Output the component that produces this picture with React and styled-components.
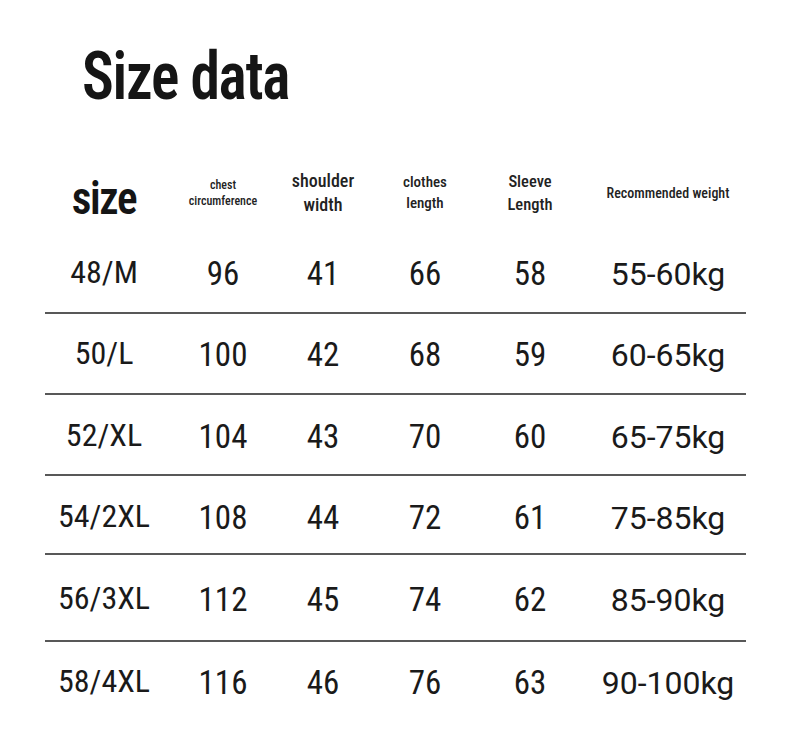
import React from 'react';
import styled, { createGlobalStyle } from 'styled-components';

const GlobalStyle = createGlobalStyle`
  html, body {
    margin: 0;
    padding: 0;
    background: #ffffff;
  }
  body {
    width: 790px;
    height: 738px;
    overflow: hidden;
    color: #1a1a1a;
    font-family: Roboto, "Liberation Sans", sans-serif;
  }
`;

const CONDENSED = `"Roboto Condensed", Roboto, "Liberation Sans", sans-serif`;

const Page = styled.div`
  padding: 43px 44px 0 45px;
`;

const TitleBar = styled.div`
  height: 67px;
  margin: 0 0 50px 37px;
`;

const Title = styled.h1`
  display: inline-block;
  margin: 0;
  font-family: ${CONDENSED};
  font-stretch: condensed;
  font-weight: 600;
  font-size: 67px;
  line-height: 67px;
  letter-spacing: -1.5px;
  transform: scaleX(0.89);
  transform-origin: left center;
  color: #151515;
`;

const Table = styled.div`
  width: 701px;
`;

const Row = styled.div`
  display: grid;
  grid-template-columns: 118px 120px 80px 124px 86px 173px;
  align-items: center;
  height: ${p => p.$h}px;
  box-sizing: border-box;
  padding-top: ${p => p.$shift || 0}px;
  border-bottom: ${p => (p.$last ? 'none' : '2px solid #585858')};
`;

const HeaderRow = styled(Row)`
  padding-bottom: 10px;
`;

const Cell = styled.div`
  text-align: center;
  padding-left: ${p => p.$pad || 0}px;
`;

const SizeHead = styled.span`
  display: inline-block;
  font-family: ${CONDENSED};
  font-stretch: condensed;
  font-weight: 600;
  font-size: 47px;
  line-height: 48px;
  letter-spacing: -1.5px;
  transform: scaleX(0.92);
  margin-top: 10px;
  color: #151515;
`;

const HeadText = styled.div`
  font-family: ${CONDENSED};
  font-stretch: condensed;
  font-weight: 500;
  font-size: ${p => p.$size}px;
  line-height: ${p => p.$lh}px;
  color: #222;
`;

const SizeValue = styled.span`
  font-family: ${CONDENSED};
  font-stretch: condensed;
  font-size: 32px;
  line-height: 40px;
  position: relative;
  top: -2px;
`;

const NumValue = styled.span`
  font-family: ${CONDENSED};
  font-stretch: condensed;
  font-size: 33px;
  line-height: 40px;
`;

const WeightValue = styled.span`
  font-family: Roboto, "Liberation Sans", sans-serif;
  font-size: 32px;
  line-height: 40px;
`;

const rows = [
  { size: '48/M', chest: 96, shoulder: 41, length: 66, sleeve: 58, weight: '55-60kg', h: 79, shift: 0 },
  { size: '50/L', chest: 100, shoulder: 42, length: 68, sleeve: 59, weight: '60-65kg', h: 81, shift: 2 },
  { size: '52/XL', chest: 104, shoulder: 43, length: 70, sleeve: 60, weight: '65-75kg', h: 81, shift: 5 },
  { size: '54/2XL', chest: 108, shoulder: 44, length: 72, sleeve: 61, weight: '75-85kg', h: 79, shift: 6 },
  { size: '56/3XL', chest: 112, shoulder: 45, length: 74, sleeve: 62, weight: '85-90kg', h: 87, shift: 4 },
  { size: '58/4XL', chest: 116, shoulder: 46, length: 76, sleeve: 63, weight: '90-100kg', h: 82, shift: 0 },
];

export default function App() {
  return (
    <Page>
      <GlobalStyle />
      <TitleBar>
        <Title>Size data</Title>
      </TitleBar>
      <Table>
        <HeaderRow $h={75} $last>
          <Cell>
            <SizeHead>size</SizeHead>
          </Cell>
          <Cell>
            <HeadText $size={12} $lh={16}>chest<br />circumference</HeadText>
          </Cell>
          <Cell>
            <HeadText $size={18} $lh={24}>shoulder<br />width</HeadText>
          </Cell>
          <Cell>
            <HeadText $size={15} $lh={21}>clothes<br />length</HeadText>
          </Cell>
          <Cell>
            <HeadText $size={16.5} $lh={23}>Sleeve<br />Length</HeadText>
          </Cell>
          <Cell $pad={17}>
            <HeadText $size={14} $lh={20}>Recommended weight</HeadText>
          </Cell>
        </HeaderRow>
        {rows.map((r, i) => (
          <Row key={r.size} $h={r.h} $shift={r.shift} $last={i === rows.length - 1}>
            <Cell><SizeValue>{r.size}</SizeValue></Cell>
            <Cell><NumValue>{r.chest}</NumValue></Cell>
            <Cell><NumValue>{r.shoulder}</NumValue></Cell>
            <Cell><NumValue>{r.length}</NumValue></Cell>
            <Cell><NumValue>{r.sleeve}</NumValue></Cell>
            <Cell $pad={17}><WeightValue>{r.weight}</WeightValue></Cell>
          </Row>
        ))}
      </Table>
    </Page>
  );
}
